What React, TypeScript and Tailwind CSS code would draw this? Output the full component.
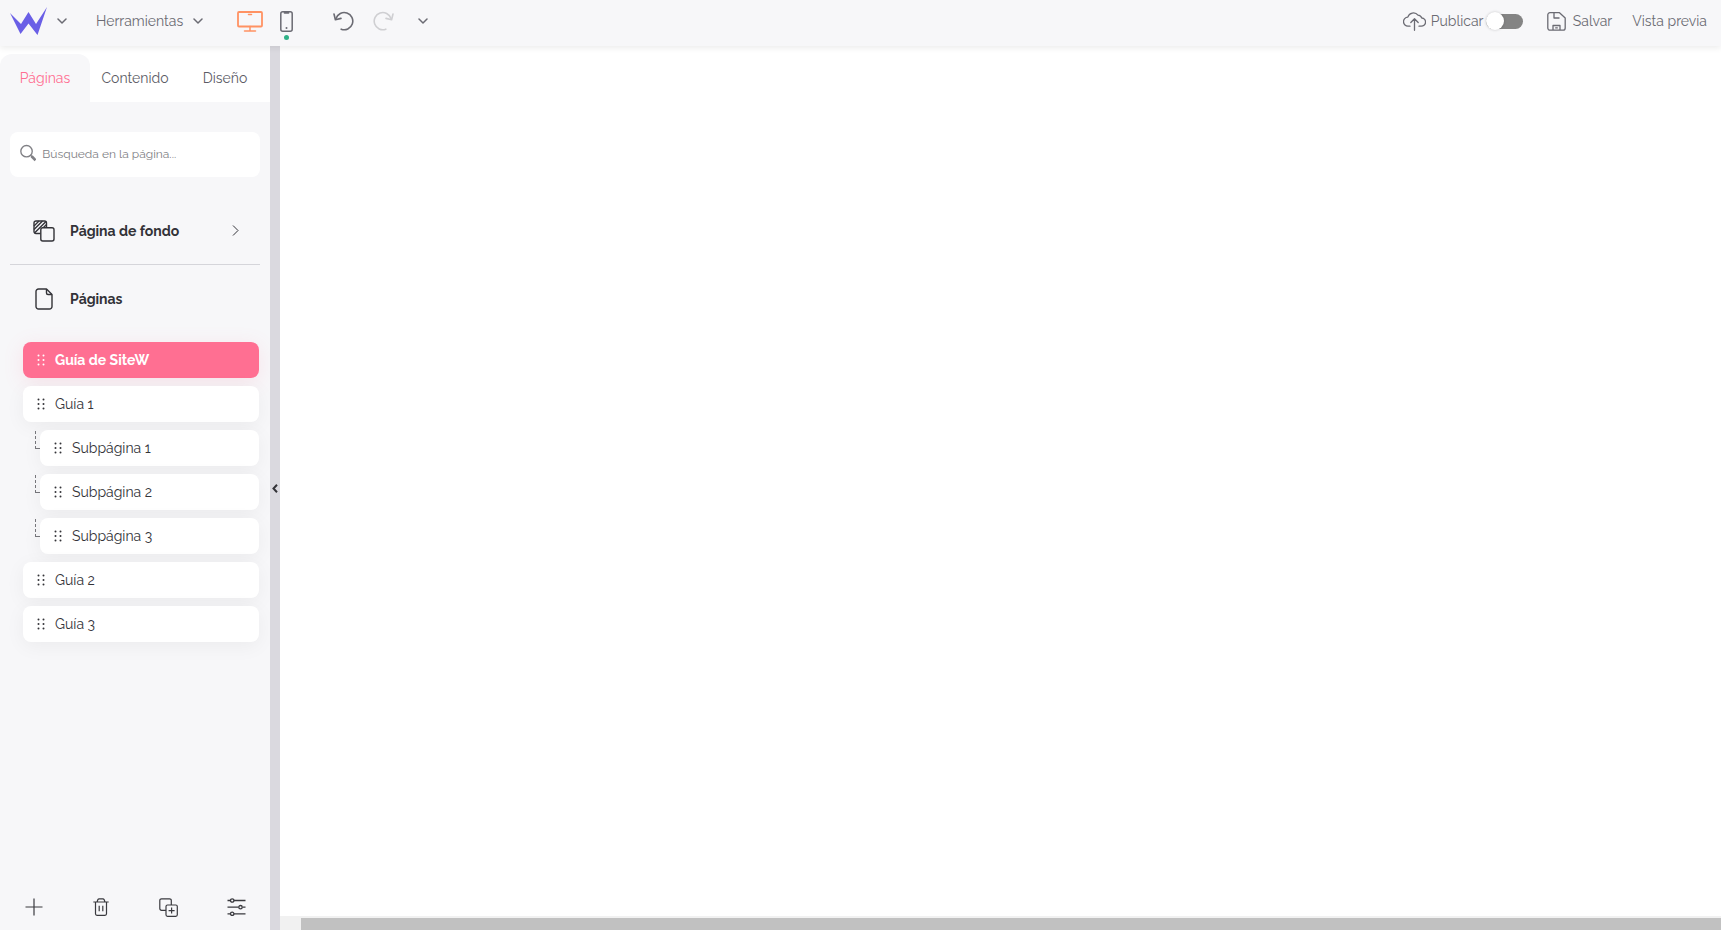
import { useState } from 'react'

type Page = { id: string; title: string; sub?: boolean }

const pages: Page[] = [
  { id: 'home', title: 'Guía de SiteW' },
  { id: 'g1', title: 'Guía 1' },
  { id: 's1', title: 'Subpágina 1', sub: true },
  { id: 's2', title: 'Subpágina 2', sub: true },
  { id: 's3', title: 'Subpágina 3', sub: true },
  { id: 'g2', title: 'Guía 2' },
  { id: 'g3', title: 'Guía 3' },
]

const tabs = ['Páginas', 'Contenido', 'Diseño']

function Chevron() {
  return (
    <svg width="10" height="6" viewBox="0 0 10 6" fill="none" stroke="currentColor" strokeWidth="1.5" strokeLinecap="round" strokeLinejoin="round">
      <path d="M1 1l4 4 4-4" />
    </svg>
  )
}

function Logo() {
  return (
    <svg width="38" height="28" viewBox="0 0 38 28" fill="#6a5fe6">
      <path d="M0 6 11 17 18.500 5 26 17 37 0 27.500 28 18.500 16.500 10.500 27Z" />
    </svg>
  )
}

function MonitorIcon() {
  return (
    <svg width="26" height="21" viewBox="0 0 26 21" fill="none" stroke="currentColor" strokeWidth="1.800" strokeLinecap="round" strokeLinejoin="round">
      <rect x="1" y="1" width="24" height="14.500" rx="1" />
      <path d="M11.500 3.500h3M13 15.500v4M7.500 20h11" strokeWidth="1.500" />
    </svg>
  )
}

function PhoneIcon() {
  return (
    <svg width="13" height="21" viewBox="0 0 13 21" fill="none" stroke="currentColor" strokeWidth="1.500" strokeLinecap="round">
      <rect x="0.800" y="0.800" width="11.400" height="19.400" rx="2" />
      <path d="M4.500 1.800h4" strokeWidth="1.800" />
      <path d="M6.500 17v.1" strokeWidth="2" />
    </svg>
  )
}

function UndoIcon() {
  return (
    <svg width="21" height="20" viewBox="0 0 21 20" fill="none" stroke="currentColor" strokeWidth="1.600" strokeLinecap="round" strokeLinejoin="round">
      <path d="M3 7.500A8.600 8.600 0 1 1 8.200 18.200" />
      <path d="M1 3l1.400 5.800L8 7.400" />
    </svg>
  )
}

function RedoIcon() {
  return (
    <svg width="21" height="20" viewBox="0 0 21 20" fill="none" stroke="currentColor" strokeWidth="1.600" strokeLinecap="round" strokeLinejoin="round">
      <path d="M18 7.500A8.600 8.600 0 1 0 12.800 18.200" />
      <path d="M20 3l-1.400 5.800L13 7.400" />
    </svg>
  )
}

function CloudIcon() {
  return (
    <svg width="23" height="19" viewBox="0 0 23 19" fill="none" stroke="currentColor" strokeWidth="1.300" strokeLinecap="round" strokeLinejoin="round">
      <path d="M7 14.200H5.200A4.500 4.500 0 0 1 4.800 5.200 5.800 5.800 0 0 1 15 3.200 4.300 4.300 0 0 1 18.800 6 4.100 4.100 0 0 1 18 14.200h-2" />
      <path d="M11.500 18.300V6.800M7.800 10.500l3.700-3.800 3.700 3.800" />
    </svg>
  )
}

function SaveIcon() {
  return (
    <svg width="19" height="19" viewBox="0 0 19 19" fill="none" stroke="currentColor" strokeWidth="1.300" strokeLinejoin="round">
      <path d="M3 .7h9.500L18.200 6v10a2.200 2.200 0 0 1-2.200 2.200H3A2.200 2.200 0 0 1 .8 16V3A2.200 2.200 0 0 1 3 .7Z" />
      <path d="M7 .7V6h5.500M6 18v-4.500h7V18M8.200 15.800h2.600" />
    </svg>
  )
}

function SearchIcon() {
  return (
    <svg width="18" height="18" viewBox="0 0 18 18" fill="none" stroke="currentColor" strokeWidth="1.500">
      <circle cx="7.200" cy="7" r="6.300" />
      <path d="M11.500 11.300l2 2" />
      <path d="M12.800 12.600l4.400 4.400" strokeWidth="3" />
    </svg>
  )
}

function BackgroundIcon() {
  return (
    <svg width="22" height="22" viewBox="0 0 22 22" fill="none" stroke="currentColor" strokeWidth="1.400" strokeLinejoin="round">
      <path d="M7.500 13.500H3a2 2 0 0 1-2-2V3a2 2 0 0 1 2-2h8.500a2 2 0 0 1 2 2v4.500" />
      <path d="M1 6l5-5M1 9.500L9.500 1M1.500 13L13 1.500M9 9l4.500-4.500" />
      <rect x="7.800" y="7.800" width="13.200" height="13.200" rx="2" fill="#f7f7f9" />
    </svg>
  )
}

function FileIcon() {
  return (
    <svg width="18" height="22" viewBox="0 0 18 22" fill="none" stroke="currentColor" strokeWidth="1.400" strokeLinejoin="round">
      <path d="M3.500 1H11.500L17 6.500v12a2.500 2.500 0 0 1-2.500 2.500h-11A2.500 2.500 0 0 1 1 18.500v-15A2.500 2.500 0 0 1 3.500 1Z" />
      <path d="M11.500 1v4a1.500 1.500 0 0 0 1.500 1.500h4" />
    </svg>
  )
}

function DragIcon() {
  return (
    <svg width="8" height="12" viewBox="0 0 8 12" fill="currentColor">
      <circle cx="1.500" cy="1.500" r="1" />
      <circle cx="6.500" cy="1.500" r="1" />
      <circle cx="1.500" cy="6" r="1" />
      <circle cx="6.500" cy="6" r="1" />
      <circle cx="1.500" cy="10.500" r="1" />
      <circle cx="6.500" cy="10.500" r="1" />
    </svg>
  )
}

function PlusIcon() {
  return (
    <svg width="18" height="18" viewBox="0 0 18 18" fill="none" stroke="currentColor" strokeWidth="1.200">
      <path d="M9 .5v17M.5 9h17" />
    </svg>
  )
}

function TrashIcon() {
  return (
    <svg width="16" height="18" viewBox="0 0 16 18" fill="none" stroke="currentColor" strokeWidth="1.200" strokeLinejoin="round">
      <path d="M.3 4h15.400M4 4l.8-2.300A1.500 1.500 0 0 1 6.200.8h3.600a1.500 1.500 0 0 1 1.400.9L12 4" />
      <path d="M2.500 4v11.800a1.500 1.500 0 0 0 1.500 1.500h8a1.500 1.500 0 0 0 1.500-1.500V4M6.200 7.800v5.400M9.800 7.800v5.400" />
    </svg>
  )
}

function DuplicateIcon() {
  return (
    <svg width="19" height="19" viewBox="0 0 19 19" fill="none" stroke="currentColor" strokeWidth="1.200" strokeLinejoin="round">
      <path d="M7 12.300H2.500a1.700 1.700 0 0 1-1.700-1.700V2.500A1.700 1.700 0 0 1 2.500.8h8.100a1.700 1.700 0 0 1 1.700 1.700V7" />
      <rect x="7" y="7" width="11.300" height="11.300" rx="1.500" />
      <path d="M12.600 9.600v6M9.600 12.600h6" />
    </svg>
  )
}

function SlidersIcon() {
  return (
    <svg width="19" height="18" viewBox="0 0 19 18" fill="none" stroke="currentColor" strokeWidth="1.300">
      <path d="M.5 2.500h3M7 2.500h11.500M.5 9.200h11M15.500 9.200h3M.5 15.800h3M7 15.800h11.500" />
      <circle cx="5.200" cy="2.500" r="1.700" />
      <circle cx="13.500" cy="9.200" r="1.700" />
      <circle cx="5.200" cy="15.800" r="1.700" />
    </svg>
  )
}

function Header() {
  const [published, setPublished] = useState(false)

  return (
    <header className="relative z-10 flex h-[46px] shrink-0 items-center justify-between bg-[#f7f7f9] pr-3.5 pb-1 pl-2.5 text-[#6b6b73] shadow-[0_2px_6px_rgba(0,0,0,0.08)]">
      <div className="flex items-center">
        <button className="flex items-center gap-[9px]" aria-label="SiteW">
          <Logo />
          <Chevron />
        </button>
        <button className="ml-[29px] flex w-[107px] items-center justify-between">
          Herramientas
          <Chevron />
        </button>
        <button className="ml-[34px] text-[#ff9263]" aria-label="Escritorio">
          <MonitorIcon />
        </button>
        <button className="relative ml-[17px]" aria-label="Móvil">
          <PhoneIcon />
          <span className="absolute -bottom-2 left-1 h-[5px] w-[5px] rounded-full bg-[#2fb187]" />
        </button>
        <button className="ml-10" aria-label="Deshacer">
          <UndoIcon />
        </button>
        <button className="ml-[19px] text-[#cfcfd2]" aria-label="Rehacer">
          <RedoIcon />
        </button>
        <button className="ml-6" aria-label="Historial">
          <Chevron />
        </button>
      </div>

      <div className="flex items-center">
        <label className="flex cursor-pointer items-center">
          <CloudIcon />
          <span className="ml-[5px] w-[55px]">Publicar</span>
          <input
            type="checkbox"
            className="peer sr-only"
            checked={published}
            onChange={(e) => setPublished(e.target.checked)}
          />
          <span className="flex h-[15px] w-[37px] items-center justify-start rounded-full bg-[#848484] peer-checked:justify-end peer-checked:bg-[#2fb187]">
            <span className="h-[18px] w-[18px] shrink-0 rounded-full bg-white shadow-[0_0_3px_rgba(0,0,0,0.2)]" />
          </span>
        </label>
        <button className="ml-6 flex items-center gap-[7px]">
          <SaveIcon />
          Salvar
        </button>
        <button className="ml-5">Vista previa</button>
      </div>
    </header>
  )
}

function Sidebar() {
  const [tab, setTab] = useState('Páginas')
  const [active, setActive] = useState('home')

  return (
    <aside className="flex w-[270px] shrink-0 flex-col bg-[#f7f7f9] text-[#333338]">
      <div className="grid h-14 grid-cols-3 bg-white pt-2">
        {tabs.map((t) => (
          <button
            key={t}
            onClick={() => setTab(t)}
            className={tab === t ? 'rounded-t-xl bg-[#f7f7f9] text-[#ff6f92]' : 'text-[#5c5c66]'}
          >
            {t}
          </button>
        ))}
      </div>

      <label className="mx-2.5 mt-[30px] flex h-[45px] items-center gap-1.5 rounded-lg bg-white pb-1 pl-2.5 text-[#808085]">
        <SearchIcon />
        <input
          type="text"
          aria-label="Búsqueda en la página"
          placeholder="Búsqueda en la página..."
          className="mt-0.5 w-full min-w-0 bg-transparent text-xs outline-none placeholder:text-[#808085]"
        />
      </label>

      <button className="mx-2.5 mt-5 flex h-[68px] items-center border-b border-[#d5d5da] pr-[21px] pl-[23px] font-bold">
        <BackgroundIcon />
        <span className="ml-[15px] flex-1 text-left">Página de fondo</span>
        <svg width="7" height="11" viewBox="0 0 7 11" fill="none" stroke="currentColor" strokeWidth="1">
          <path d="M1 .5l5 5-5 5" />
        </svg>
      </button>

      <h2 className="flex h-[68px] items-center gap-[17px] pl-[35px] font-bold">
        <FileIcon />
        Páginas
      </h2>

      <ul className="mt-[9px] mr-[11px] ml-[23px] flex flex-col gap-2">
        {pages.map((p) => (
          <li key={p.id} className="flex">
            {p.sub && (
              <span className="mt-px mr-[-1px] ml-3 h-[18px] w-1.5 shrink-0 border-b border-l border-[#77777c] [border-left-style:dashed]" />
            )}
            <button
              onClick={() => setActive(p.id)}
              className={`flex h-9 flex-1 items-center gap-2.5 rounded-lg pl-3.5 ${
                active === p.id
                  ? 'bg-[#ff6f92] font-bold text-white shadow-[0_4px_20px_rgba(255,111,146,0.15)]'
                  : 'bg-white shadow-[0_4px_20px_rgba(0,0,0,0.05)]'
              }`}
            >
              <DragIcon />
              {p.title}
            </button>
          </li>
        ))}
      </ul>

      <div className="mt-auto grid h-[46px] grid-cols-4 text-[#3a3a3f]">
        <button className="flex items-center justify-center" aria-label="Añadir">
          <PlusIcon />
        </button>
        <button className="flex items-center justify-center" aria-label="Eliminar">
          <TrashIcon />
        </button>
        <button className="flex items-center justify-center" aria-label="Duplicar">
          <DuplicateIcon />
        </button>
        <button className="flex items-center justify-center" aria-label="Ajustes">
          <SlidersIcon />
        </button>
      </div>
    </aside>
  )
}

export default function App() {
  return (
    <div className="flex h-screen flex-col overflow-hidden bg-white font-['Raleway','Lato',sans-serif] text-sm leading-5">
      <Header />
      <div className="flex min-h-0 flex-1">
        <Sidebar />
        <button className="flex w-2.5 shrink-0 items-center justify-center bg-[#dad9df] text-[#333338]" aria-label="Plegar panel">
          <svg width="6" height="9" viewBox="0 0 6 9" fill="none" stroke="currentColor" strokeWidth="2">
            <path d="M5 .8L1.500 4.500 5 8.200" />
          </svg>
        </button>
        <main className="flex min-w-0 flex-1 flex-col">
          <div className="flex-1" />
          <div className="h-3.5 bg-[#f1f1f1] pt-0.5 pl-[21px]">
            <div className="h-full bg-[#c1c1c1]" />
          </div>
        </main>
      </div>
    </div>
  )
}
